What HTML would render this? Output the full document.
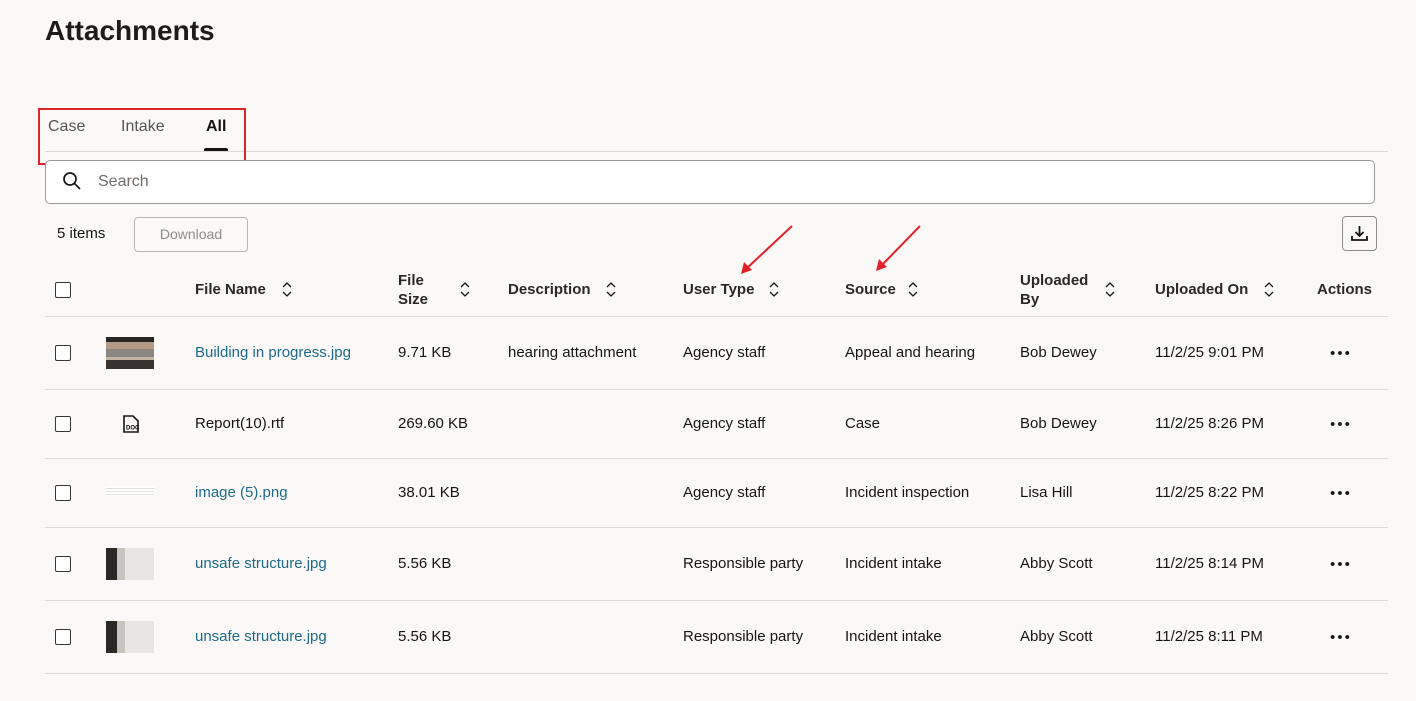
<!DOCTYPE html>
<html><head><meta charset="utf-8"><style>
*{margin:0;padding:0;box-sizing:border-box}
body{width:1416px;height:701px;background:#faf9f8;font-family:"Liberation Sans",sans-serif;color:#161513;position:relative;overflow:hidden;font-size:15px}
.a{position:absolute;white-space:nowrap}
h1{position:absolute;left:45px;top:15px;font-size:28px;font-weight:bold;color:#1d1c1a}
.hl{position:absolute;left:45px;width:1343px;height:1px;background:#dedcd9}
.cb{position:absolute;left:55px;width:16px;height:16px;border:1.5px solid #3a3835;border-radius:2px;background:#fff}
.th{font-weight:bold;font-size:15px;color:#2a2927}
.link{color:#1e6a85}
.dots{position:absolute;left:1329px;width:22px;height:4px;background:radial-gradient(circle,#161513 1.7px,transparent 2.2px) 0 0/7.3px 4px repeat-x}
</style></head><body>
<h1>Attachments</h1>
<div class="a" style="left:48px;top:118px;font-size:16px;color:#555">Case</div>
<div class="a" style="left:121px;top:118px;font-size:16px;color:#555">Intake</div>
<div class="a" style="left:206px;top:118px;font-size:16px;font-weight:bold">All</div>
<div class="a" style="left:204px;top:148px;width:24px;height:4px;background:#161513;border-radius:2px 2px 0 0"></div>
<div class="hl" style="top:151px;background:#dcdad7"></div>
<div class="a" style="left:38px;top:108px;width:208px;height:57px;border:2px solid #e0232b"></div>
<div class="a" style="left:45px;top:160px;width:1330px;height:44px;border:1px solid #9d9a96;border-radius:5px;background:#fff"></div>
<svg class="a" style="left:62px;top:171px" width="20" height="20" viewBox="0 0 20 20"><circle cx="8" cy="8" r="6" fill="none" stroke="#161513" stroke-width="1.7"/><line x1="12.5" y1="12.5" x2="18" y2="18" stroke="#161513" stroke-width="1.7"/></svg>
<div class="a" style="left:98px;top:173px;font-size:16px;color:#6f6c69">Search</div>
<div class="a" style="left:57px;top:225px;font-size:15px">5 items</div>
<div class="a" style="left:134px;top:217px;width:114px;height:35px;border:1px solid #b9b6b2;border-radius:4px;color:#8f8c88;font-size:14px;text-align:center;line-height:33px">Download</div>
<div class="a" style="left:1342px;top:216px;width:35px;height:35px;border:1px solid #8f8c88;border-radius:4px"></div>
<svg class="a" style="left:1350px;top:224px" width="19" height="19" viewBox="0 0 19 19"><path d="M9.5 2v10M5.5 8l4 4 4-4M2 12v4h15v-4" fill="none" stroke="#161513" stroke-width="1.8"/></svg>
<svg class="a" style="left:0;top:0" width="1416" height="701"><g stroke="#e0232b" stroke-width="2" fill="#e0232b"><line x1="792" y1="226" x2="746" y2="269"/><polygon points="741,274 744,262 752,270" stroke="none"/><line x1="920" y1="226" x2="881" y2="266"/><polygon points="876,271 879,259 887,267" stroke="none"/></g></svg>
<div class="cb" style="top:282px"></div>
<div class="a th" style="left:195px;top:281px">File Name</div>
<div class="a th" style="left:398px;top:271px;line-height:19px">File<br>Size</div>
<div class="a th" style="left:508px;top:281px">Description</div>
<div class="a th" style="left:683px;top:281px">User Type</div>
<div class="a th" style="left:845px;top:281px">Source</div>
<div class="a th" style="left:1020px;top:271px;line-height:19px">Uploaded<br>By</div>
<div class="a th" style="left:1155px;top:281px">Uploaded On</div>
<div class="a th" style="left:1317px;top:281px">Actions</div>
<svg class="a" style="left:0;top:0" width="1416" height="701"><g fill="none" stroke="#161513" stroke-width="1.3"><path d="M283 287l4-4 4 4M283 292l4 4 4-4"/><path d="M461 287l4-4 4 4M461 292l4 4 4-4"/><path d="M607 287l4-4 4 4M607 292l4 4 4-4"/><path d="M770 287l4-4 4 4M770 292l4 4 4-4"/><path d="M909 287l4-4 4 4M909 292l4 4 4-4"/><path d="M1106 287l4-4 4 4M1106 292l4 4 4-4"/><path d="M1265 287l4-4 4 4M1265 292l4 4 4-4"/></g></svg>
<div class="hl" style="top:316px"></div>
<div class="hl" style="top:389px"></div>
<div class="hl" style="top:458px"></div>
<div class="hl" style="top:527px"></div>
<div class="hl" style="top:600px"></div>
<div class="hl" style="top:673px"></div>
<!-- row1 -->
<div class="cb" style="top:345px"></div>
<div class="a" style="left:106px;top:337px;width:48px;height:32px;background:linear-gradient(#2a2623 0 5px,#b59a86 5px 12px,#8a8580 12px 20px,#c3b3a3 20px 23px,#3a3430 23px 32px)"></div>
<div class="a link" style="left:195px;top:344px">Building in progress.jpg</div>
<div class="a" style="left:398px;top:344px">9.71 KB</div>
<div class="a" style="left:508px;top:344px">hearing attachment</div>
<div class="a" style="left:683px;top:344px">Agency staff</div>
<div class="a" style="left:845px;top:344px">Appeal and hearing</div>
<div class="a" style="left:1020px;top:344px">Bob Dewey</div>
<div class="a" style="left:1155px;top:344px">11/2/25 9:01 PM</div>
<div class="dots" style="top:351px"></div>
<!-- row2 -->
<div class="cb" style="top:416px"></div>
<svg class="a" style="left:122px;top:414px" width="20" height="20" viewBox="0 0 20 20"><path d="M2 2h9l5 5v11H2z" fill="none" stroke="#161513" stroke-width="1.6"/><text x="4" y="15.5" font-size="6" font-weight="bold" font-family="Liberation Sans">DOC</text></svg>
<div class="a" style="left:195px;top:415px">Report(10).rtf</div>
<div class="a" style="left:398px;top:415px">269.60 KB</div>
<div class="a" style="left:683px;top:415px">Agency staff</div>
<div class="a" style="left:845px;top:415px">Case</div>
<div class="a" style="left:1020px;top:415px">Bob Dewey</div>
<div class="a" style="left:1155px;top:415px">11/2/25 8:26 PM</div>
<div class="dots" style="top:422px"></div>
<!-- row3 -->
<div class="cb" style="top:485px"></div>
<div class="a" style="left:106px;top:486px;width:48px;height:10px;background:repeating-linear-gradient(#fff 0 2px,#e3e1de 2px 3px)"></div>
<div class="a link" style="left:195px;top:484px">image (5).png</div>
<div class="a" style="left:398px;top:484px">38.01 KB</div>
<div class="a" style="left:683px;top:484px">Agency staff</div>
<div class="a" style="left:845px;top:484px">Incident inspection</div>
<div class="a" style="left:1020px;top:484px">Lisa Hill</div>
<div class="a" style="left:1155px;top:484px">11/2/25 8:22 PM</div>
<div class="dots" style="top:491px"></div>
<!-- row4 -->
<div class="cb" style="top:556px"></div>
<div class="a" style="left:106px;top:548px;width:48px;height:32px;background:linear-gradient(90deg,#2b2926 0 11px,#c7c4c0 11px 19px,#e8e6e3 19px 48px)"></div>
<div class="a link" style="left:195px;top:555px">unsafe structure.jpg</div>
<div class="a" style="left:398px;top:555px">5.56 KB</div>
<div class="a" style="left:683px;top:555px">Responsible party</div>
<div class="a" style="left:845px;top:555px">Incident intake</div>
<div class="a" style="left:1020px;top:555px">Abby Scott</div>
<div class="a" style="left:1155px;top:555px">11/2/25 8:14 PM</div>
<div class="dots" style="top:562px"></div>
<!-- row5 -->
<div class="cb" style="top:629px"></div>
<div class="a" style="left:106px;top:621px;width:48px;height:32px;background:linear-gradient(90deg,#2b2926 0 11px,#c7c4c0 11px 19px,#e8e6e3 19px 48px)"></div>
<div class="a link" style="left:195px;top:628px">unsafe structure.jpg</div>
<div class="a" style="left:398px;top:628px">5.56 KB</div>
<div class="a" style="left:683px;top:628px">Responsible party</div>
<div class="a" style="left:845px;top:628px">Incident intake</div>
<div class="a" style="left:1020px;top:628px">Abby Scott</div>
<div class="a" style="left:1155px;top:628px">11/2/25 8:11 PM</div>
<div class="dots" style="top:635px"></div>
</body></html>
